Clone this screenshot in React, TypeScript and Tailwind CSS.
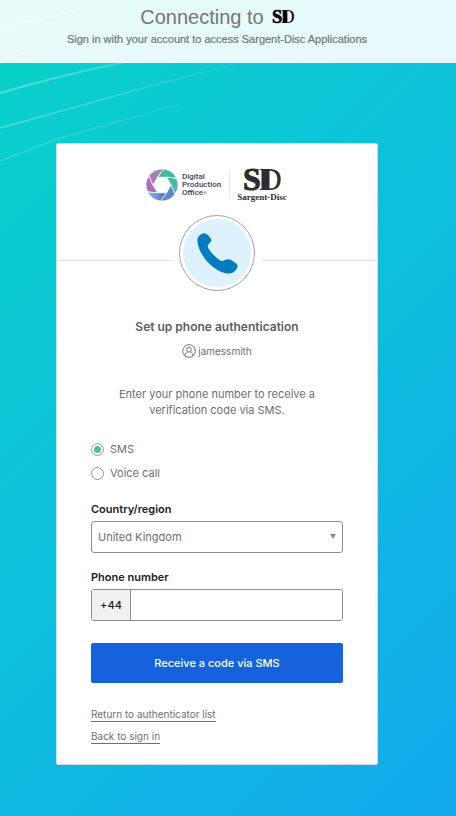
import { useState } from 'react';

const blades = ['url(#bladeGreen)', 'url(#bladeTeal)', '#5c86cf', 'url(#bladeBlue)', '#b06dbd', 'url(#bladeGrey)'];

function ApertureMark() {
  return (
    <svg viewBox="0 0 32 32" className="h-8 w-8 shrink-0" aria-hidden="true">
      <defs>
        <linearGradient id="bladeGreen" x1="0" y1="0" x2="1" y2="0">
          <stop offset="0" stopColor="#5fae9f" />
          <stop offset="1" stopColor="#22c590" />
        </linearGradient>
        <linearGradient id="bladeTeal" x1="0" y1="0" x2="1" y2="0">
          <stop offset="0" stopColor="#35c49a" />
          <stop offset="1" stopColor="#62a9bd" />
        </linearGradient>
        <linearGradient id="bladeBlue" x1="0" y1="0" x2="1" y2="0">
          <stop offset="0" stopColor="#5f62b8" />
          <stop offset="1" stopColor="#83bde8" />
        </linearGradient>
        <linearGradient id="bladeGrey" x1="0" y1="0" x2="1" y2="0">
          <stop offset="0" stopColor="#c568b4" />
          <stop offset="1" stopColor="#829aa8" />
        </linearGradient>
      </defs>
      <g transform="translate(16 16)">
        {blades.map((color, i) => (
          <path
            key={color}
            transform={`rotate(${i * 60})`}
            d="M-4.5 -7.8L4.5 -7.8Q10 -7.5 14.6 -6.5A16 16 0 0 0 1.7 -15.9Q-1.5 -12.4 -4.5 -7.8Z"
            fill={color}
            stroke="#fff"
            strokeWidth="0.7"
          />
        ))}
      </g>
    </svg>
  );
}

function Monogram({ className, color }: { className: string; color: string }) {
  return (
    <svg viewBox="0 0 38 24" className={`overflow-visible ${className}`} role="img" aria-label="SD" fill={color}>
      <text x="0" y="22" fontSize="32" fontFamily="'Liberation Serif', serif">
        <tspan fontWeight="700" stroke={color} strokeWidth="1">S</tspan>
        <tspan dx="-2">D</tspan>
      </text>
      <rect x="18.5" y="1" width="8" height="21" />
    </svg>
  );
}

function PhoneBadge() {
  return (
    <div className="mx-[7px] flex size-19 items-center justify-center rounded-full border border-[#a3a3a3] bg-white">
      <div className="flex size-[68px] items-center justify-center rounded-full bg-[#def1ff]">
        <svg viewBox="109 82 123 123" className="size-[41px]" aria-hidden="true">
          <path
            fill="#007dc1"
            d="M110 103C110 95 120 84 130 83C138 82 150 97 152 102C154 108 142 114 141 120C142 132 168 160 182 166C188 167 194 161 203 161C210 161 226 172 230 178C233 185 224 198 214 202C208 204 200 204 194 203C160 195 112 150 110 103Z"
          />
        </svg>
      </div>
    </div>
  );
}

function UserIcon() {
  return (
    <svg viewBox="0 0 14 14" className="size-[14px]" fill="none" stroke="#6e6e78" strokeWidth="1" aria-hidden="true">
      <circle cx="7" cy="7" r="6.3" />
      <circle cx="7" cy="5.7" r="2.4" />
      <path d="M3.2 11.8V10.4C3.2 9.2 4.2 8.6 5.4 8.4M10.8 11.8V10.4C10.8 9.2 9.8 8.6 8.6 8.4" />
    </svg>
  );
}

function Streaks() {
  return (
    <svg className="absolute left-0 top-0 h-[180px] w-[456px]" viewBox="0 0 456 180" fill="none" stroke="url(#streakFade)" aria-hidden="true">
      <defs>
        <linearGradient id="streakFade" gradientUnits="userSpaceOnUse" x1="0" y1="0" x2="260" y2="0">
          <stop offset="0" stopColor="#fff" stopOpacity=".3" />
          <stop offset="0.5" stopColor="#fff" stopOpacity=".18" />
          <stop offset="1" stopColor="#fff" stopOpacity="0" />
        </linearGradient>
      </defs>
      <path d="M0 93Q62 75 125 62L300 28" strokeWidth="2" />
      <path d="M0 128L83 105L150 86L260 58" strokeWidth="1.5" />
      <path d="M0 161L60 138L180 104" strokeWidth="1.5" strokeOpacity=".6" />
      <path d="M0 28L120 0" strokeWidth="3" />
      <path d="M0 60L150 20" strokeWidth="2" />
    </svg>
  );
}

const methods = [
  { id: 'sms', label: 'SMS' },
  { id: 'voice', label: 'Voice call' },
];

export default function App() {
  const [method, setMethod] = useState('sms');
  const [phone, setPhone] = useState('');

  return (
    <div className="relative min-h-screen bg-[linear-gradient(135deg,#09d3c7_0%,#0dc2d9_42%,#11b0e8_85%,#13a9ee_100%)] font-['Inter','Liberation_Sans',sans-serif] text-[#6e6e78]">
      <Streaks />
      <header className="relative flex h-[63px] flex-col items-center bg-white/90 pr-[22px] pt-[5px] font-['Liberation_Sans',sans-serif] text-[#757575]">
        <h1 className="flex items-center gap-2 text-[20px] leading-6">
          Connecting to
          <Monogram className="h-[14px] w-[22px]" color="#000" />
        </h1>
        <p className="pt-0.5 text-[11px] leading-4 [-webkit-text-stroke:0.2px_#757575]">Sign in with your account to access Sargent-Disc Applications</p>
      </header>

      <main className="relative flex justify-center pb-[51px] pr-[22px] pt-20">
        <section className="w-[322px] rounded-xs border border-[#d8d8d8] bg-white">
          <div className="flex h-[71px] justify-center pt-6">
            <div className="flex h-[34px] items-center">
              <ApertureMark />
              <div className="w-[45px] whitespace-nowrap pl-1 font-['Roboto',sans-serif] text-[8px] font-medium leading-[8px] text-[#3f4157]">
                Digital
                <br />
                Production
                <br />
                Office<span className="align-top text-[4px]">®</span>
              </div>
              <div className="mx-1.5 h-6 w-px bg-[#e4e4e4]" />
              <div className="flex w-[52px] flex-col items-center text-[#2d2d2d]">
                <Monogram className="h-6 w-[38px]" color="#2d2d2d" />
                <span className="whitespace-nowrap font-['Liberation_Serif',serif] text-[9px] font-bold leading-[10px]">Sargent-Disc</span>
              </div>
            </div>
          </div>

          <div className="flex items-end">
            <div className="mb-[30px] h-px grow bg-[#dddddd]" />
            <PhoneBadge />
            <div className="mb-[30px] h-px grow bg-[#dddddd]" />
          </div>

          <form className="flex flex-col px-[34px] pb-5 pt-[27px]" onSubmit={(e) => e.preventDefault()}>
            <h2 className="text-center text-[12px] font-semibold leading-[18px] text-[#5e5e5e]">Set up phone authentication</h2>
            <div className="mt-[7px] flex items-center justify-center gap-[2px] text-[10px] leading-4">
              <UserIcon />
              <span>jamessmith</span>
            </div>
            <p className="mx-auto mt-[27px] w-[210px] text-center text-[11px] leading-4">
              Enter your phone number to receive a verification code via SMS.
            </p>

            <fieldset className="mt-[19px] flex flex-col">
              {methods.map((m) => (
                <label key={m.id} className="flex h-6 items-center gap-1.5 text-[11px]">
                  <input
                    type="radio"
                    name="method"
                    checked={method === m.id}
                    onChange={() => setMethod(m.id)}
                    className="size-[13px] appearance-none rounded-full border border-[#999999] bg-white bg-clip-content p-[2px] checked:bg-[#4cbf9c]"
                  />
                  {m.label}
                </label>
              ))}
            </fieldset>

            <label htmlFor="country" className="mt-4 text-[11px] font-semibold leading-4 text-[#1d1d21]">
              Country/region
            </label>
            <div className="relative mt-1">
              <select
                id="country"
                className="block h-8 w-full appearance-none rounded-[3px] border border-[#8c8c96] bg-white px-1.5 text-[11px] text-[#6e6e78]"
              >
                <option>United Kingdom</option>
              </select>
              <svg viewBox="0 0 6 5" className="pointer-events-none absolute right-[7px] top-[13px] h-[5px] w-[6px]" fill="#8c8c8c" aria-hidden="true">
                <path d="M0 0H6L3 5Z" />
              </svg>
            </div>

            <label htmlFor="phone" className="mt-4 text-[11px] font-semibold leading-4 text-[#1d1d21]">
              Phone number
            </label>
            <div className="mt-1 flex h-8 overflow-hidden rounded-[3px] border border-[#8c8c96]">
              <span className="flex w-[39px] items-center justify-center border-r border-[#8c8c96] bg-[#f1f1f1] text-[11px] font-medium text-[#1d1d21]">
                +44
              </span>
              <input
                id="phone"
                type="tel"
                value={phone}
                onChange={(e) => setPhone(e.target.value)}
                className="min-w-0 grow bg-white px-1.5 text-[11px] outline-none"
              />
            </div>

            <button type="submit" className="mt-[22px] h-10 rounded-xs bg-[#1662dd] text-[11px] font-medium text-white shadow-xs">
              Receive a code via SMS
            </button>

            <div className="mt-6 flex flex-col items-start gap-[7px] text-[10px] leading-[14px]">
              <a href="#authenticators" className="border-b border-[#6e6e78]">Return to authenticator list</a>
              <a href="#signin" className="border-b border-[#6e6e78]">Back to sign in</a>
            </div>
          </form>
        </section>
      </main>
    </div>
  );
}
